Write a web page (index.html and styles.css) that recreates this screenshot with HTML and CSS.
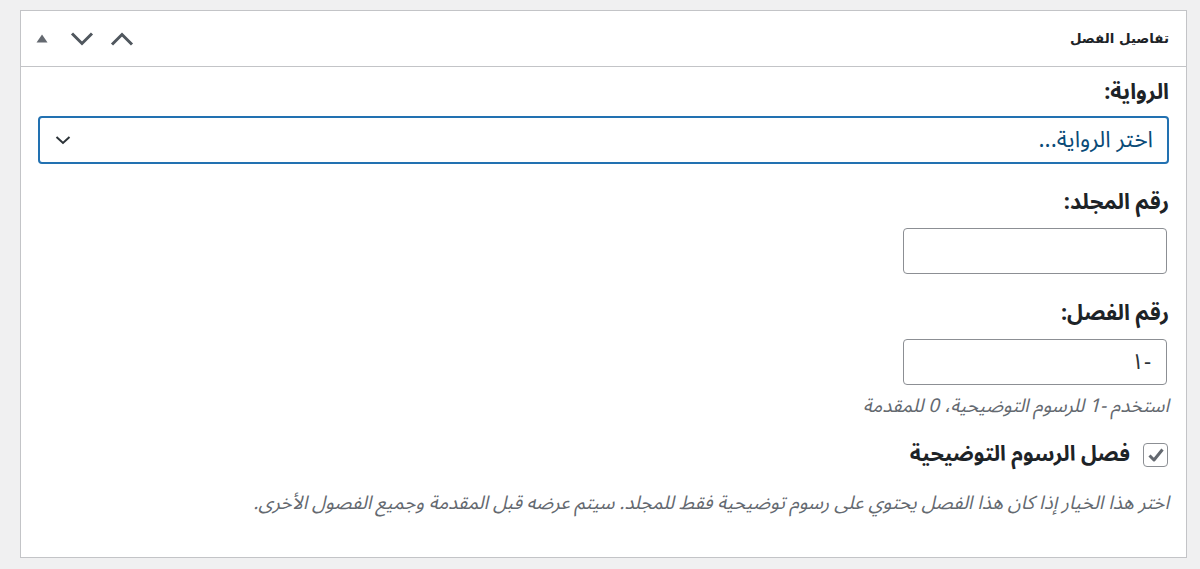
FILE: index.html
```html
<!DOCTYPE html>
<html lang="ar" dir="rtl">
<head>
<meta charset="utf-8">
<title>تفاصيل الفصل</title>
<link rel="stylesheet" href="styles.css">
</head>
<body>
<div class="postbox">
  <div class="postbox-header">
    <h2 class="postbox-title">تفاصيل الفصل</h2>
    <div class="handle-actions">
      <button class="handle-btn" aria-label="نقل للأعلى">
        <svg width="24" height="14" viewBox="0 0 24 14"><path d="M2 12.5 L12 2.5 L22 12.5" fill="none" stroke="#50575e" stroke-width="3"/></svg>
      </button>
      <button class="handle-btn" aria-label="نقل للأسفل">
        <svg width="24" height="14" viewBox="0 0 24 14"><path d="M2 1.5 L12 11.5 L22 1.5" fill="none" stroke="#50575e" stroke-width="3"/></svg>
      </button>
      <button class="handle-btn" aria-label="تبديل">
        <svg width="12" height="9" viewBox="0 0 12 9"><path d="M0.5 8.5 L6 0.5 L11.5 8.5 Z" fill="#646970"/></svg>
      </button>
    </div>
  </div>
  <div class="inside">
    <div class="field field-novel">
      <label class="field-label" for="novel">الرواية:</label>
      <div class="select-box" id="novel">
        <span class="select-value">اختر الرواية...</span>
        <svg class="select-arrow" width="16" height="10" viewBox="0 0 16 10"><path d="M1.5 2 L8 8 L14.5 2" fill="none" stroke="#2c3338" stroke-width="2"/></svg>
      </div>
    </div>
    <div class="field field-volume">
      <label class="field-label" for="volume">رقم المجلد:</label>
      <input class="text-input" id="volume" type="text" value="">
    </div>
    <div class="field field-chapter">
      <label class="field-label" for="chapter">رقم الفصل:</label>
      <input class="text-input" id="chapter" type="text" value="-١">
      <p class="description desc-chapter">استخدم -1 للرسوم التوضيحية، 0 للمقدمة</p>
    </div>
    <div class="check-row">
      <span class="checkbox">
        <svg width="18" height="16" viewBox="0 0 18 16"><path d="M2.5 8.5 L7 13 L15.5 2.5" fill="none" stroke="#646970" stroke-width="3" stroke-linejoin="round"/></svg>
      </span>
      <span class="check-label">فصل الرسوم التوضيحية</span>
    </div>
    <p class="description desc-check">اختر هذا الخيار إذا كان هذا الفصل يحتوي على رسوم توضيحية فقط للمجلد. سيتم عرضه قبل المقدمة وجميع الفصول الأخرى.</p>
  </div>
</div>
</body>
</html>
```

FILE: styles.css
```css
* { box-sizing: border-box; }
html, body { margin: 0; }
body {
  background: #f0f0f1;
  padding: 10px 13px 0 20px;
  font-family: "Noto Sans Arabic", "Noto Sans", sans-serif;
  color: #1d2327;
  direction: rtl;
}
.postbox {
  background: #fff;
  border: 1px solid #c3c4c7;
  height: 548px;
}
.postbox-header {
  height: 56px;
  border-bottom: 1px solid #c3c4c7;
  display: flex;
  align-items: center;
  justify-content: space-between;
  padding: 0 17px 0 1px;
}
.postbox-title {
  margin: 0;
  font-family: "DejaVu Sans", sans-serif;
  font-size: 13.4px;
  font-weight: 700;
  line-height: 20px;
  color: #1d2327;
}
.handle-actions {
  display: flex;
  align-items: center;
}
.handle-btn {
  background: none;
  border: 0;
  padding: 0;
  width: 40px;
  height: 36px;
  display: flex;
  align-items: center;
  justify-content: center;
}
.handle-btn svg { display: block; }
.inside {
  padding: 13px 17px 0 17px;
}
.field-label {
  display: block;
  font-size: 21.7px;
  font-weight: 700;
  line-height: 24px;
  color: #1d2327;
}
.select-box {
  margin-top: 12px;
  height: 48px;
  border: 2px solid #2271b1;
  border-radius: 4px;
  display: flex;
  align-items: center;
  justify-content: space-between;
  padding: 0 14px 0 15px;
}
.select-value {
  font-size: 22.8px;
  line-height: 28px;
  color: #0a4b78;
}
.select-arrow { display: block; }
.field-volume { margin-top: 26px; }
.field-chapter { margin-top: 27px; }
.text-input {
  display: block;
  margin: 14px 2px 0 0;
  width: 264px;
  height: 46px;
  border: 1px solid #8c8f94;
  border-radius: 4px;
  background: #fff;
  padding: 0 15px;
  font-family: inherit;
  font-size: 22px;
  line-height: 28px;
  color: #2c3338;
  direction: rtl;
  text-align: right;
}
.description {
  margin: 0;
  font-size: 19px;
  font-style: italic;
  color: #646970;
  line-height: 20px;
}
.desc-chapter { margin-top: 11px; }
.check-row {
  margin: 27px 1px 0 0;
  display: flex;
  align-items: center;
  gap: 13px;
  height: 24px;
}
.checkbox {
  flex: none;
  width: 25px;
  height: 24px;
  border: 1px solid #8c8f94;
  border-radius: 4px;
  display: flex;
  align-items: center;
  justify-content: center;
}
.check-label {
  font-size: 21.3px;
  font-weight: 700;
  line-height: 24px;
  color: #1d2327;
}
.desc-check { margin-top: 26px; }
```
